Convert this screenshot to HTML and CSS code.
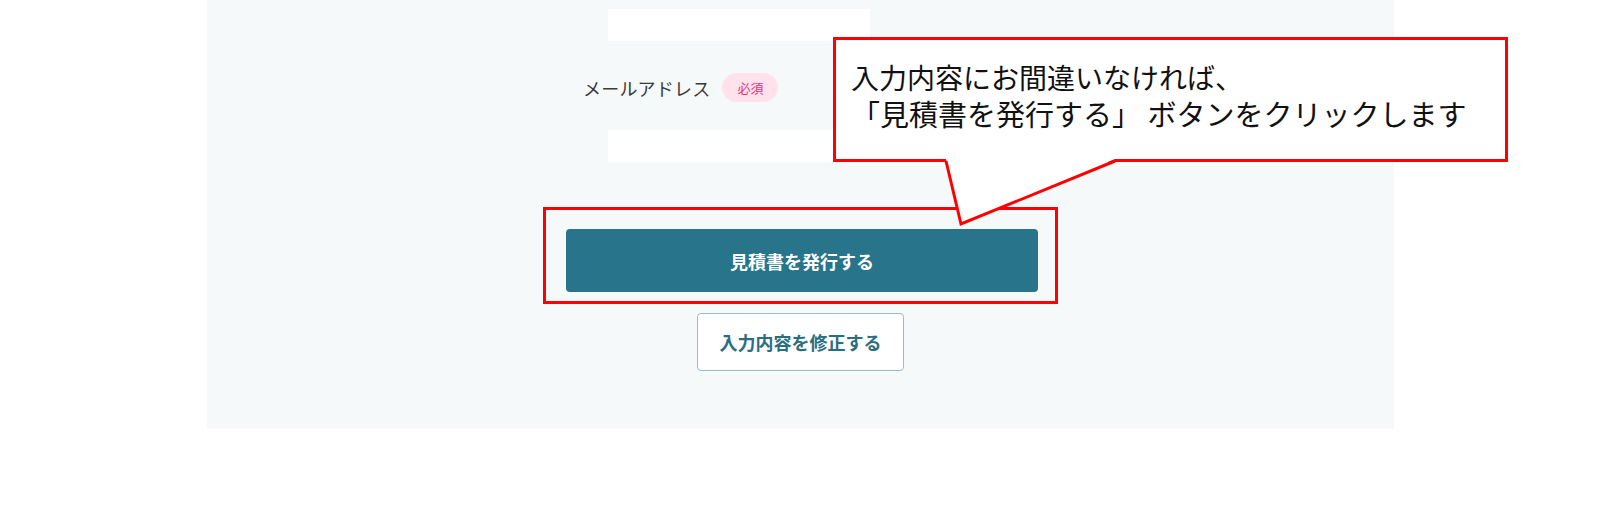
FILE: index.html
```html
<!DOCTYPE html>
<html lang="ja">
<head>
  <meta charset="UTF-8" />
  <title>見積書の発行</title>
  <link rel="stylesheet" href="styles.css">
</head>
<body>
  <div class="panel">
    <div class="fields">
      <div class="input"></div>
      <div class="label-row">
        <span class="label">メールアドレス</span>
        <span class="badge">必須</span>
      </div>
      <div class="input"></div>
    </div>

    <div class="highlight">
      <button class="btn-primary" type="button">見積書を発行する</button>
    </div>
    <button class="btn-secondary" type="button">入力内容を修正する</button>
  </div>

  <!-- annotation -->
  <div class="callout">
    <p>入力内容にお間違いなければ、</p>
    <p class="callout-second">「見積書を発行する」 ボタンをクリックします</p>
  </div>
  <svg class="callout-tail" width="200" height="75" viewBox="0 0 200 75" aria-hidden="true">
    <polygon points="16,2 31,67 185,2" fill="#fff" />
    <polyline points="16,4 31,67 185,4" fill="none" stroke="#ff0000" stroke-width="3" stroke-linejoin="miter" />
  </svg>
</body>
</html>
```

FILE: styles.css
```css
* { margin: 0; padding: 0; box-sizing: border-box; }
body {
  background: #fff;
  font-family: "Noto Sans CJK JP", "Noto Sans", sans-serif;
  height: 523px;
  overflow: hidden;
  position: relative;
}

.panel {
  margin-left: 207px;
  width: 1187px;
  height: 429px;
  background: #f5f9fa;
  padding-top: 9px;
  display: flex;
  flex-direction: column;
  align-items: center;
}

/* form fields */
.fields {
  align-self: flex-start;
  margin-left: 376px;
  display: flex;
  flex-direction: column;
}
.input {
  margin-left: 25px;
  width: 262px;
  height: 32px;
  background: #fff;
}
.label-row {
  display: flex;
  align-items: center;
  gap: 12px;
  margin: 32px 0 28px;
}
.label {
  font-size: 18px;
  color: #3a3a3a;
  letter-spacing: 0.2px;
}
.badge {
  display: inline-flex;
  align-items: center;
  justify-content: center;
  width: 56px;
  height: 29px;
  border-radius: 15px;
  background: #ffe2eb;
  color: #e5357a;
  font-size: 13px;
}

/* buttons */
.highlight {
  margin-top: 45px;
  border: 3px solid #ff0000;
  padding: 19px 17px 9px 20px;
}
.btn-primary {
  display: block;
  width: 472px;
  height: 63px;
  border: none;
  border-radius: 4px;
  background: #27748b;
  color: #fff;
  font-family: inherit;
  font-size: 18px;
  font-weight: 700;
}
.btn-secondary {
  margin-top: 9px;
  width: 207px;
  height: 58px;
  background: #fff;
  border: 1px solid #98bccb;
  border-radius: 4px;
  color: #2a6e82;
  font-family: inherit;
  font-size: 18px;
  font-weight: 700;
}

/* callout annotation */
.callout {
  position: absolute;
  left: 833px;
  top: 37px;
  width: 675px;
  height: 125px;
  background: #fff;
  border: 3px solid #ff0000;
  padding: 19px 0 0 15px;
  font-size: 28px;
  line-height: 36px;
  color: #111;
}
.callout-second {
  font-size: 29px;
}
.callout-tail {
  position: absolute;
  left: 930px;
  top: 157px;
}
```
